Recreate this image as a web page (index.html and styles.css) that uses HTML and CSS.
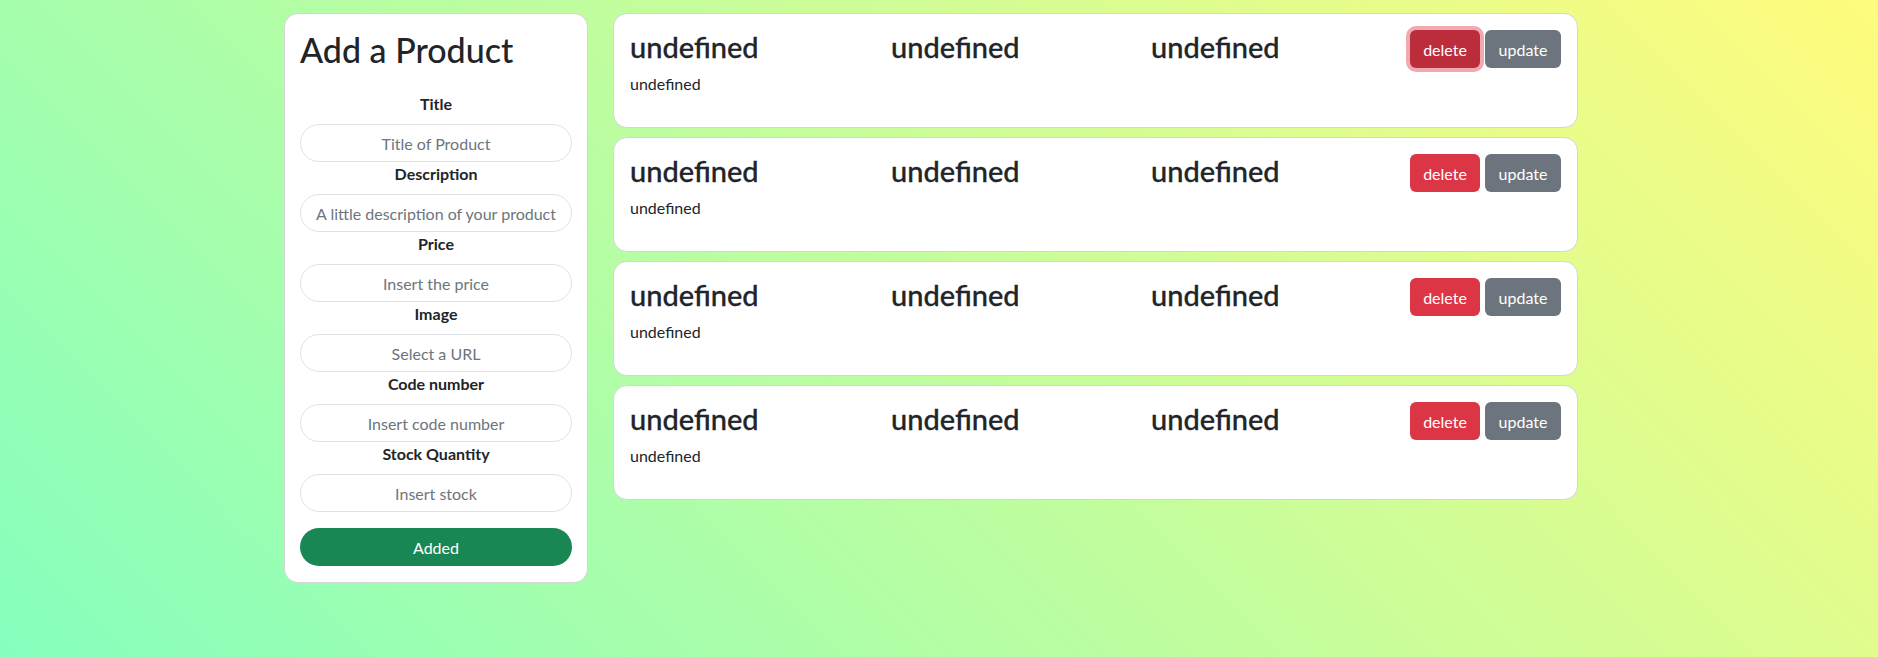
FILE: index.html
```html
<!DOCTYPE html>
<html lang="en">
<head>
<meta charset="utf-8">
<title>Products</title>
<link rel="stylesheet" href="styles.css">
</head>
<body>
<main class="page">
  <section class="form-card">
    <h1 class="form-title">Add a Product</h1>
    <form class="form">
      <label class="label" for="title">Title</label>
      <input class="field" id="title" type="text" placeholder="Title of Product">
      <label class="label" for="desc">Description</label>
      <input class="field" id="desc" type="text" placeholder="A little description of your product">
      <label class="label" for="price">Price</label>
      <input class="field" id="price" type="text" placeholder="Insert the price">
      <label class="label" for="image">Image</label>
      <input class="field" id="image" type="text" placeholder="Select a URL">
      <label class="label" for="code">Code number</label>
      <input class="field" id="code" type="text" placeholder="Insert code number">
      <label class="label" for="stock">Stock Quantity</label>
      <input class="field" id="stock" type="text" placeholder="Insert stock">
      <button class="submit" type="button">Added</button>
    </form>
  </section>

  <section class="list">
    <article class="product">
      <div class="product-head">
        <h2 class="product-name">undefined</h2>
        <h2 class="product-name">undefined</h2>
        <h2 class="product-name">undefined</h2>
        <div class="actions">
          <button class="btn btn-delete is-focused" type="button">delete</button>
          <button class="btn btn-update" type="button">update</button>
        </div>
      </div>
      <p class="product-desc">undefined</p>
    </article>
    <article class="product">
      <div class="product-head">
        <h2 class="product-name">undefined</h2>
        <h2 class="product-name">undefined</h2>
        <h2 class="product-name">undefined</h2>
        <div class="actions">
          <button class="btn btn-delete" type="button">delete</button>
          <button class="btn btn-update" type="button">update</button>
        </div>
      </div>
      <p class="product-desc">undefined</p>
    </article>
    <article class="product">
      <div class="product-head">
        <h2 class="product-name">undefined</h2>
        <h2 class="product-name">undefined</h2>
        <h2 class="product-name">undefined</h2>
        <div class="actions">
          <button class="btn btn-delete" type="button">delete</button>
          <button class="btn btn-update" type="button">update</button>
        </div>
      </div>
      <p class="product-desc">undefined</p>
    </article>
    <article class="product">
      <div class="product-head">
        <h2 class="product-name">undefined</h2>
        <h2 class="product-name">undefined</h2>
        <h2 class="product-name">undefined</h2>
        <div class="actions">
          <button class="btn btn-delete" type="button">delete</button>
          <button class="btn btn-update" type="button">update</button>
        </div>
      </div>
      <p class="product-desc">undefined</p>
    </article>
  </section>
</main>
</body>
</html>
```

FILE: styles.css
```css
* {
  box-sizing: border-box;
}

html,
body {
  height: 100%;
}

body {
  margin: 0;
  font-family: "Lato", "Noto Sans", "Liberation Sans", sans-serif;
  font-size: 16px;
  color: #212529;
  background: linear-gradient(45deg, #85ffbd 0%, #fffb7d 100%);
  background-attachment: fixed;
}

.page {
  display: flex;
  align-items: flex-start;
  gap: 25px;
  padding: 13px 0 0 284px;
}

/* ---------- form card ---------- */

.form-card {
  width: 304px;
  flex: none;
  background: #fff;
  border: 1px solid #d3d6d9;
  border-radius: 14px;
  padding: 16px 15px 16px;
}

.form-title {
  margin: 0 0 22px;
  font-size: 34px;
  line-height: 40px;
  font-weight: 500;
}

.form {
  display: flex;
  flex-direction: column;
}

.label {
  display: block;
  text-align: center;
  font-weight: 700;
  font-size: 16px;
  line-height: 24px;
  margin-bottom: 8px;
}

.field {
  display: block;
  width: 100%;
  height: 38px;
  border: 1px solid #dee2e6;
  border-radius: 19px;
  padding: 0 12px;
  font: inherit;
  font-size: 16px;
  text-align: center;
  color: #212529;
  background: #fff;
  outline: none;
}

.field::placeholder {
  color: #6c757d;
}

.submit {
  margin-top: 16px;
  height: 38px;
  width: 100%;
  border: none;
  border-radius: 19px;
  background: #198754;
  color: #fff;
  font: inherit;
  font-size: 16px;
}

/* ---------- product list ---------- */

.list {
  width: 965px;
  display: flex;
  flex-direction: column;
  gap: 9px;
}

.product {
  background: #fff;
  border: 1px solid #d3d6d9;
  border-radius: 14px;
  padding: 15px 16px 15px;
  height: 115px;
}

.product-head {
  display: grid;
  grid-template-columns: 261px 260px 1fr auto;
  align-items: start;
}

.product-name {
  margin: 0;
  font-size: 29px;
  line-height: 36px;
  font-weight: 500;
  -webkit-text-stroke: 0.3px #212529;
}

.actions {
  display: flex;
  gap: 5px;
  padding-top: 1px;
}

.btn {
  height: 38px;
  padding: 0 12px;
  border: none;
  border-radius: 6px;
  color: #fff;
  font: inherit;
  font-size: 16px;
}

.btn-delete {
  width: 70px;
  background: #dc3545;
}

.btn-delete.is-focused {
  background: #bb2d3b;
  box-shadow: 0 0 0 4px rgba(225, 83, 97, 0.5);
}

.btn-update {
  width: 76px;
  background: #6c757d;
}

.product-desc {
  margin: 4px 0 0;
  font-size: 16px;
  line-height: 24px;
}
```
